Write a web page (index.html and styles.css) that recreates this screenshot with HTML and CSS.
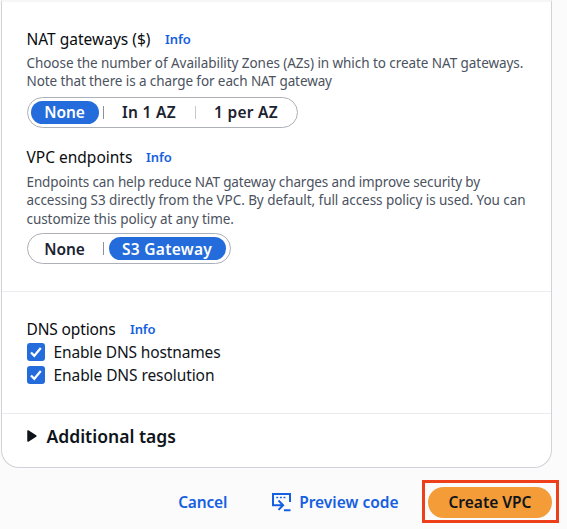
FILE: index.html
```
<!DOCTYPE html>
<html lang="en">
<head>
<meta charset="utf-8">
<title>Create VPC</title>
<link rel="stylesheet" href="styles.css">
</head>
<body>
<main class="card">
  <section class="section network">
    <div class="field">
      <h3 class="label">NAT gateways ($) <a class="info">Info</a></h3>
      <p class="hint"><span class="line snug">Choose the number of Availability Zones (AZs) in which to create NAT gateways.</span>
      <span class="line tight">Note that there is a charge for each NAT gateway</span></p>
      <div class="segments nat">
        <button class="segment active">None</button>
        <span class="rule"></span>
        <button class="segment az">In 1 AZ</button>
        <span class="rule faint"></span>
        <button class="segment per">1 per AZ</button>
      </div>
    </div>
    <div class="field endpoints">
      <h3 class="label">VPC endpoints <a class="info info-vpc">Info</a></h3>
      <p class="hint"><span class="line tighter">Endpoints can help reduce NAT gateway charges and improve security by</span>
      <span class="line snug">accessing S3 directly from the VPC. By default, full access policy is used. You can</span>
      <span class="line snug">customize this policy at any time.</span></p>
      <div class="segments s3">
        <button class="segment">None</button>
        <span class="rule"></span>
        <button class="segment active wide">S3 Gateway</button>
      </div>
    </div>
  </section>
  <section class="section dns">
    <h3 class="label dns-label">DNS options <a class="info">Info</a></h3>
    <div class="check"><svg class="box" viewBox="0 0 18 18"><rect width="18" height="18" rx="3"/><path d="M4 9.4l3.3 3.4L13.8 5"/></svg><span class="hostnames">Enable DNS hostnames</span></div>
    <div class="check"><svg class="box" viewBox="0 0 18 18"><rect width="18" height="18" rx="3"/><path d="M4 9.4l3.3 3.4L13.8 5"/></svg><span>Enable DNS resolution</span></div>
  </section>
  <section class="section tags">
    <svg class="caret" viewBox="0 0 10 12"><path d="M1 1v10l7.8-5z"/></svg>
    <h2 class="tags-title">Additional tags</h2>
  </section>
</main>
<footer class="actions">
  <button class="link cancel">Cancel</button>
  <button class="link preview">
    <svg class="code-icon" viewBox="0 0 20 20"><path d="M19 10V2H2v11.2h9.6M7.5 8.5l4.6 4.7-4.6 4.7M13 18.2h6.5"/><path class="dots" d="M5.3 5.5h1.9M8.9 5.5h1.9M12.5 5.5h1.9"/></svg>
    <span>Preview code</span>
  </button>
  <div class="highlight"><button class="create">Create VPC</button></div>
</footer>
</body>
</html>
```
FILE: styles.css
```
* { box-sizing: border-box; }
body {
  margin: 0;
  width: 567px;
  height: 529px;
  overflow: hidden;
  background: #fbfbfc;
  color: #0f141a;
  font: 15.5px/20px "Noto Sans", "Open Sans", sans-serif;
}
h2, h3, p { margin: 0; font-weight: 400; }
button { margin: 0; padding: 0; border: 0; background: none; font: inherit; color: inherit; white-space: nowrap; }
.card {
  width: 551px;
  height: 468px;
  margin-left: 1px;
  background: #fff;
  border: 1px solid #d2d3d8;
  border-top: 2px solid #f6f6f7;
  border-radius: 0 0 18px 18px;
}
.section { padding-left: 24.5px; border-bottom: 1px solid #ebebf0; }
.network { height: 290px; padding-top: 27px; }
.label { display: flex; align-items: center; height: 20px; font-size: 15.5px; color: #0a0c10; white-space: nowrap; }
.info { margin-left: 14.5px; color: #1560e0; font-size: 13px; font-weight: 600; }
.info-vpc { margin-left: 13.5px; }
.hint { margin-top: 5px; color: #4b5260; font-size: 13.5px; line-height: 18.4px; }
.endpoints .hint { margin-top: 6px; }
.endpoints .segments { margin-top: 5px; }
.line { display: block; white-space: nowrap; }
.snug { letter-spacing: -0.06px; }
.tight { letter-spacing: -0.1px; }
.tighter { letter-spacing: -0.13px; }
.segments {
  display: flex;
  align-items: center;
  height: 31px;
  margin-top: 6px;
  padding: 0 3px;
  border: 1px solid #adb0b8;
  border-radius: 16px;
  font-weight: 600;
  color: #1b2230;
}
.nat { width: 271px; padding-right: 0; }
.s3 { width: 204px; }
.segment { flex: none; width: 68px; height: 23px; border-radius: 12px; line-height: 22px; letter-spacing: -0.1px; }
.active { background: #246bdb; color: #fff; }
.rule { flex: none; width: 1px; height: 13px; margin: 0 5px 0 4px; background: #8c919b; }
.nat .rule { margin-right: 0; }
.nat .faint { background: #c6c9ce; margin: 0; }
.az { width: 91px; letter-spacing: .3px; }
.per { width: 101px; letter-spacing: .28px; }
.wide { width: 117px; letter-spacing: .28px; }
.endpoints { margin-top: 19px; }
.dns { height: 122px; padding-top: 27px; }
.dns-label { letter-spacing: -0.14px; margin-bottom: 2px; }
.check { display: flex; align-items: center; height: 22.7px; gap: 9px; letter-spacing: -0.08px; }
.hostnames { letter-spacing: -0.14px; }
.box { width: 18px; height: 18px; }
.box rect { fill: #246bdb; }
.box path { fill: none; stroke: #fff; stroke-width: 2.2; }
.tags { display: flex; align-items: center; height: 44px; border: 0; }
.caret { width: 10px; height: 12px; }
.caret path { fill: #0f141a; stroke: #0f141a; stroke-width: 1.5; stroke-linejoin: round; }
.tags-title { margin-left: 10px; font-size: 17.5px; font-weight: 600; }
.actions { display: flex; align-items: center; justify-content: flex-end; height: 43px; margin-top: 12px; padding-right: 8px; font-weight: 600; }
.link { color: #1560e0; }
.cancel { letter-spacing: -0.18px; }
.preview { display: flex; align-items: center; gap: 8px; margin: 0 23.5px 0 44px; }
.code-icon { width: 20px; height: 20px; fill: none; stroke: #1560e0; stroke-width: 2; }
.dots { stroke-width: 1.7; }
.highlight { width: 137px; height: 43px; padding: 4px; border: 3px solid #ee3f1b; }
.create { width: 124px; height: 31px; margin-left: -1px; padding-bottom: 1px; border-radius: 16px; background: #f39c38; color: #0f141a; }
```
